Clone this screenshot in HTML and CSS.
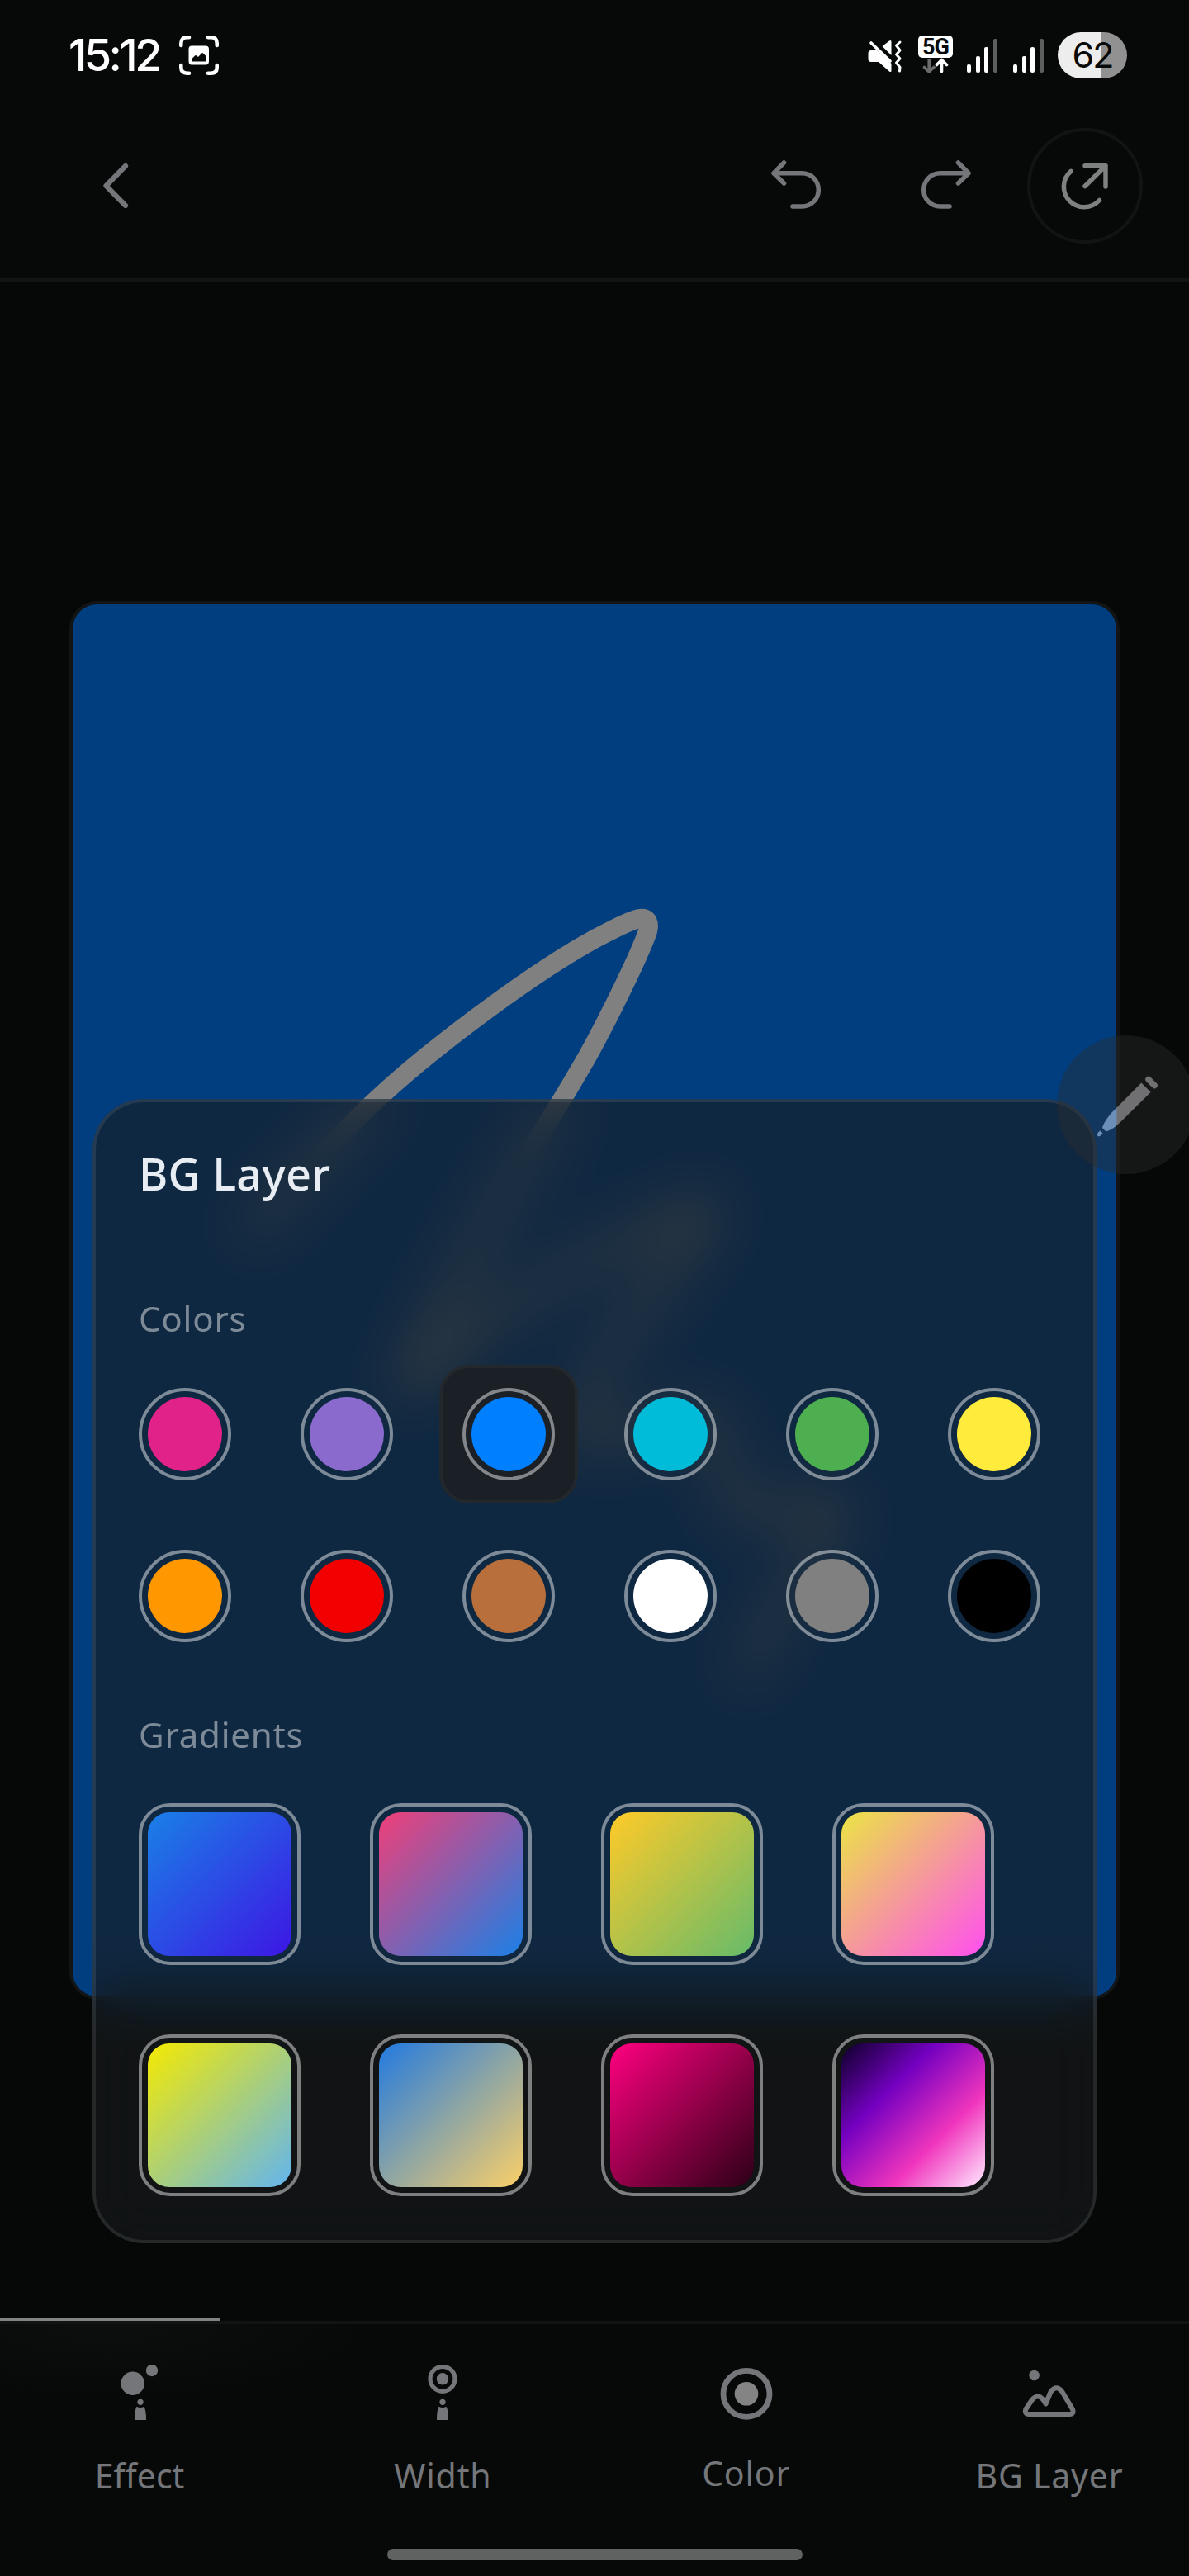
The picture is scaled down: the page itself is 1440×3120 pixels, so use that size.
FILE: index.html
```html
<!DOCTYPE html>
<html lang="en">
<head>
<meta charset="utf-8">
<title>Drawing editor</title>
<link rel="stylesheet" href="styles.css">
</head>
<body>
<div class="screen">
  <header class="top">
    <div class="status">
      <div class="status-left">
        <span class="clock">15:12</span>
        <svg class="shot" width="50" height="50" viewBox="0 0 50 50">
          <g fill="none" stroke="#fff" stroke-width="4.6" stroke-linecap="round">
            <path d="M3.3 13V10.500Q3.300 3.300 10.500 3.300H13M36 3.300H39.500Q46.700 3.300 46.700 10.500V13M46.700 37V39.500Q46.700 46.700 39.500 46.700H36M13 46.700H10.500Q3.300 46.700 3.300 39.500V37"/>
          </g>
          <path fill="#fff" fill-rule="evenodd" d="M16 13.500H33Q37 13.500 37 17.500V32Q37 36.500 33 36.500H16Q12.500 36.500 12.500 32V17.500Q12.500 13.500 16 13.500ZM16.500 29V32.500H33.500V26L30 22.500Q29 21.500 28 22.800L24 27L22.500 25.500Q21 24.500 20 25.500Z"/>
        </svg>
      </div>
      <div class="status-right">
        <svg class="mute" width="44" height="42" viewBox="1050 46 44 42">
          <path fill="#fff" d="M1055 60H1062L1079.500 76V84.500Q1079.500 87 1077 85.500L1064 74H1055Q1051.500 74 1051.500 70.500V63.500Q1051.500 60 1055 60ZM1068.500 55L1077 48.500Q1079.500 47 1079.500 50V66Z"/>
          <path fill="none" stroke="#fff" stroke-width="3" stroke-linecap="round" stroke-linejoin="round" d="M1090 50L1085.500 54L1090 60L1085.500 65L1090 70L1085.500 75L1090 80.500L1089.500 85"/>
          <path fill="none" stroke="#fff" stroke-width="3.600" stroke-linecap="round" d="M1055 51L1078 73"/>
        </svg>
        <span class="net">
          <span class="net-label">5G</span>
          <svg width="42" height="19" viewBox="0 0 42 19" fill="none" stroke-width="3.600" stroke-linecap="round" stroke-linejoin="round">
            <path stroke="#6b6b6b" d="M13.200 2.500V16.500M7.500 11.500L13.200 17L19 11.500"/>
            <path stroke="#fff" d="M28.500 16.500V3M22.500 8.500L28.500 2.500L34.500 8.500"/>
          </svg>
        </span>
        <span class="signal"><i class="b1"></i><i class="b2"></i><i class="b3"></i><i class="b4"></i></span>
        <span class="signal last"><i class="b1"></i><i class="b2"></i><i class="b3"></i><i class="b4"></i></span>
        <span class="battery">62</span>
      </div>
    </div>
    <div class="toolbar">
      <svg class="back" width="36" height="60" viewBox="122 195 36 60"><path d="M152 201L128.500 225L152 249"/></svg>
      <div class="actions">
        <svg width="66" height="66" viewBox="931 192 66 66"><path d="M949.500 197L937 209.700L949.500 222M937 209.700H971.500A19.800 20.200 0 0 1 971.500 250.100H960"/></svg>
        <svg class="redo" width="66" height="66" viewBox="931 192 66 66"><path d="M949.500 197L937 209.700L949.500 222M937 209.700H971.500A19.800 20.200 0 0 1 971.500 250.100H960"/></svg>
        <span class="share">
          <svg width="66" height="66" viewBox="1281 192 66 66"><path d="M1314 200.800H1339V226M1314 225.500L1339 200.800M1297 207.300A24.700 24.700 0 1 0 1331.500 242.500"/></svg>
        </span>
      </div>
    </div>
  </header>

  <main class="stage">
    <div class="canvas">
      <svg width="1264" height="1688" viewBox="88 732 1264 1688">
        <path d="M305 1490C360 1430 420 1365 457 1331C505 1286 555 1248 609 1209C655 1176 704 1145 736 1129C752 1121 763 1115 774 1112.500C785 1110.500 787 1119 784.500 1128C776 1153 740 1228 710 1282C700 1299 691 1315 681 1331C620 1430 540 1560 490 1685C560 1620 720 1500 860 1460C830 1540 700 1650 700 1740C740 1760 830 1700 865 1720C880 1760 870 1810 905 1835C940 1840 980 1800 1015 1830C1000 1880 930 1950 905 2025"/>
      </svg>
    </div>

    <section class="panel">
      <h1>BG Layer</h1>
      <h2 class="h-colors">Colors</h2>
      <div class="swatches">
        <div class="cell"><span class="ring"><i class="c-pink"></i></span></div>
        <div class="cell"><span class="ring"><i class="c-purple"></i></span></div>
        <div class="cell selected"><span class="ring"><i class="c-blue"></i></span></div>
        <div class="cell"><span class="ring"><i class="c-cyan"></i></span></div>
        <div class="cell"><span class="ring"><i class="c-green"></i></span></div>
        <div class="cell"><span class="ring"><i class="c-yellow"></i></span></div>
        <div class="cell"><span class="ring"><i class="c-orange"></i></span></div>
        <div class="cell"><span class="ring"><i class="c-red"></i></span></div>
        <div class="cell"><span class="ring"><i class="c-brown"></i></span></div>
        <div class="cell"><span class="ring"><i class="c-white"></i></span></div>
        <div class="cell"><span class="ring"><i class="c-gray"></i></span></div>
        <div class="cell"><span class="ring"><i class="c-black"></i></span></div>
      </div>
      <h2 class="h-gradients">Gradients</h2>
      <div class="gradients">
        <span class="tile"><i class="g1"></i></span>
        <span class="tile"><i class="g2"></i></span>
        <span class="tile"><i class="g3"></i></span>
        <span class="tile"><i class="g4"></i></span>
        <span class="tile"><i class="g5"></i></span>
        <span class="tile"><i class="g6"></i></span>
        <span class="tile"><i class="g7"></i></span>
        <span class="tile"><i class="g8"></i></span>
      </div>
    </section>

    <div class="pen">
      <svg width="168" height="168" viewBox="1280 1253.500 168 168">
        <defs>
          <linearGradient id="tint" gradientUnits="userSpaceOnUse" x1="1352" y1="0" x2="1353" y2="0">
            <stop offset="0" stop-color="#6b8fb8"/>
            <stop offset="1" stop-color="#707072"/>
          </linearGradient>
        </defs>
        <g fill="url(#tint)">
          <path d="M1388.300 1304.300A3.600 3.600 0 0 1 1393.500 1304.300L1400.800 1311.600A3.600 3.600 0 0 1 1395.700 1316.700L1388.300 1309.400A3.600 3.600 0 0 1 1388.300 1304.300Z"/>
          <path d="M1382.300 1311L1393.700 1322.300L1356 1359.500Q1347 1368 1339.500 1370L1335 1365.500Q1337 1358 1345.500 1348ZM1332.500 1369L1335.500 1372Q1333 1376.500 1329.500 1375.500Q1327.500 1372 1332.500 1369Z"/>
        </g>
      </svg>
    </div>
  </main>

  <nav class="tabs">
    <div class="tab">
      <svg width="70" height="70" viewBox="134 2864 70 70"><circle cx="160.700" cy="2886.700" r="14.200"/><circle cx="184" cy="2871" r="7.200"/><circle cx="170" cy="2909.300" r="3.600"/><path d="M165.500 2914.700Q170 2917.500 174.500 2914.700Q177 2919 177 2931H163Q163 2919 165.500 2914.700Z"/></svg>
      <span class="t-effect">Effect</span>
    </div>
    <div class="tab">
      <svg width="70" height="70" viewBox="502 2864 70 70"><circle class="line" stroke-width="5.200" cx="537" cy="2881.300" r="15"/><circle cx="537" cy="2881.300" r="7.200"/><circle cx="537" cy="2909.300" r="3.600"/><path d="M532.500 2914.700Q537 2917.500 541.500 2914.700Q544 2919 544 2931H530Q530 2919 532.500 2914.700Z"/></svg>
      <span class="t-width">Width</span>
    </div>
    <div class="tab">
      <svg width="70" height="70" viewBox="868.500 2864 70 70"><circle class="line" stroke-width="6.800" cx="903.500" cy="2899.300" r="28"/><circle fill="#848484" cx="903.500" cy="2899.300" r="14.300"/></svg>
      <span class="t-color">Color</span>
    </div>
    <div class="tab">
      <svg width="70" height="70" viewBox="1236 2864 70 70"><circle cx="1252.600" cy="2877" r="6.300"/><path class="line" stroke-width="6" stroke-linejoin="round" d="M1242.300 2918L1250 2906.500Q1256.500 2899 1263 2906L1266.500 2911.500L1272.500 2897Q1279.500 2887.500 1286.500 2897L1299 2918Q1301 2924 1295.500 2924H1246Q1240.500 2924 1242.300 2918Z"/></svg>
      <span class="t-bg">BG Layer</span>
    </div>
    <div class="indicator"></div>
  </nav>
  <div class="home"><i></i></div>
</div>
</body>
</html>
```
FILE: styles.css
```css
* { box-sizing: border-box; }
html, body { margin: 0; background: #060807; }
body { font-family: "Noto Sans", "Open Sans", sans-serif; }
h1, h2 { margin: 0; font-weight: 500; }
svg { display: block; flex: none; }
i { display: block; }

.screen { width: 1440px; height: 3120px; position: relative; overflow: hidden; display: flex; flex-direction: column; }

.top { height: 341px; flex: none; border-bottom: 4px solid #121413; background: #070909; }
.status { display: flex; justify-content: space-between; height: 140px; padding: 39px 75px 0 83px; }
.status-left, .status-right { display: flex; align-items: flex-start; height: 56px; }
.clock { width: 133px; font: 500 54px/56px Inter, sans-serif; letter-spacing: -3.600px; color: #fff; }
.shot { margin-top: 3px; }
.mute { margin: 8px 18px 0 0; }
.net { width: 42px; margin: 4px 17px 0 0; }
.net-label { display: block; width: 42px; height: 27px; border-radius: 5px; background: #fff; color: #080a09; font: 700 27px/28px Roboto, sans-serif; text-align: center; letter-spacing: -1px; }
.signal { width: 37px; height: 41px; margin: 8px 19px 0 0; display: flex; justify-content: space-between; align-items: flex-end; }
.signal.last { margin-right: 17px; }
.signal i { width: 5px; border-radius: 2px; background: #fff; }
.signal .b1 { height: 10px; }
.signal .b2 { height: 20px; }
.signal .b3 { height: 31px; }
.signal .b4 { height: 41px; background: #5d5e5e; }
.battery { width: 84px; height: 56px; border-radius: 28px; background: linear-gradient(90deg, #ecedec 52px, #919191 52px); color: #080a09; font: 400 43px/54px Inter, sans-serif; text-align: center; letter-spacing: -2px; }

.toolbar { display: flex; justify-content: space-between; padding: 15px 56px 0 122px; height: 155px; }
.toolbar svg { fill: none; stroke: #747679; stroke-width: 5.500; stroke-linecap: round; stroke-linejoin: round; }
.toolbar .back { margin-top: 40px; stroke-width: 6.200; }
.actions { display: flex; }
.actions > svg { margin: 37px 116px 0 0; }
.actions > .redo { margin-right: 65px; transform: scaleX(-1); }
.share { width: 140px; height: 140px; border: 4px solid #121413; border-radius: 50%; display: grid; place-items: center; }
.toolbar .share svg { stroke: #7f8080; }

.stage { height: 2470px; flex: none; position: relative; padding-top: 387px; background: #060807; }
.canvas { width: 1272px; height: 1694px; margin: 0 auto; border: 4px solid #121415; border-radius: 34px; overflow: hidden; background: #003e7f; }
.canvas path { fill: none; stroke: #808080; stroke-width: 23; stroke-linecap: round; stroke-linejoin: round; }

.panel { position: absolute; left: 112px; top: 990px; width: 1216px; height: 1386px; padding: 0 24px; border: 4px solid rgba(255,255,255,.09); border-radius: 62px; background: rgba(24,27,28,.63); background-clip: border-box; backdrop-filter: blur(34px); }
h1 { padding: 0 0 0 28px; height: 124px; margin-top: 49px; font-size: 54px; line-height: 74px; letter-spacing: .2px; color: #e8edf3; }
h2 { padding-left: 28px; font-size: 42px; line-height: 56px; font-weight: 450; letter-spacing: .8px; color: rgba(255,255,255,.46); }
.h-colors { margin-top: 61px; }
.swatches { display: grid; grid-template-columns: repeat(6, 168px); gap: 28px; margin-top: 28px; }
.cell { height: 168px; display: grid; place-items: center; }
.selected { border: 4px solid #23282d; border-radius: 36px; background: #1b2027; }
.ring { width: 112px; height: 112px; padding: 7px; border: 4px solid rgba(255,255,255,.46); border-radius: 50%; }
.ring i { width: 90px; height: 90px; border-radius: 50%; }
.c-pink { background: #e02289; }
.c-purple { background: #8a6bcd; }
.c-blue { background: #0080ff; }
.c-cyan { background: #00bcd8; }
.c-green { background: #4eaf50; }
.c-yellow { background: #ffeb3b; }
.c-orange { background: #ff9800; }
.c-red { background: #f20000; }
.c-brown { background: #b86f3c; }
.c-white { background: #fff; }
.c-gray { background: #808080; }
.c-black { background: #000; }
.h-gradients { margin-top: 56px; }
.gradients { display: grid; grid-template-columns: repeat(4, 196px); gap: 84px; margin: 55px 0 0 28px; }
.tile { width: 196px; height: 196px; padding: 7px; border: 4px solid rgba(255,255,255,.46); border-radius: 38px; }
.tile i { width: 174px; height: 174px; border-radius: 26px; }
.g1 { background: linear-gradient(135deg, #1a80e6, #3d16e4); }
.g2 { background: linear-gradient(135deg, #f03f78, #1b80e6); }
.g3 { background: linear-gradient(135deg, #ffca28, #66bb6a); }
.g4 { background: linear-gradient(135deg, #ebe544, #ff4ff0); }
.g5 { background: linear-gradient(135deg, #f5ea00, #62b5f0); }
.g6 { background: linear-gradient(135deg, #217ae0, #fbd068); }
.g7 { background: linear-gradient(135deg, #ff0080, #2c0016); }
.g8 { background: linear-gradient(135deg, #0c0028, #7400c0 33%, #f035bd 67%, #ffeaff); }

.pen { position: absolute; left: 1280px; top: 912.500px; width: 168px; height: 168px; border-radius: 50%; background: rgba(46,44,46,.4); }

.tabs { height: 309px; flex: none; position: relative; display: grid; grid-template-columns: repeat(4, 367.300px); justify-content: center; border-top: 4px solid #121413; background: radial-gradient(ellipse 330px 90px at 130px 0, #0d0e0e, #070909); }
.tab { display: flex; flex-direction: column; align-items: center; padding-top: 49px; }
.tab svg { fill: #747679; }
.tab .line { fill: none; stroke: #747679; }
.tab span { margin-top: 34px; font-size: 41px; line-height: 60px; font-weight: 450; letter-spacing: .8px; color: #747679; white-space: nowrap; }
.tab .t-effect { letter-spacing: 0; }
.tab .t-color { margin-top: 31px; }
.indicator { position: absolute; left: 0; top: -7px; width: 266px; height: 3px; background: #838383; }
.home { position: absolute; left: 0; right: 0; bottom: 19px; display: flex; justify-content: center; }
.home i { width: 503px; height: 14px; border-radius: 7px; background: #606261; }
```
